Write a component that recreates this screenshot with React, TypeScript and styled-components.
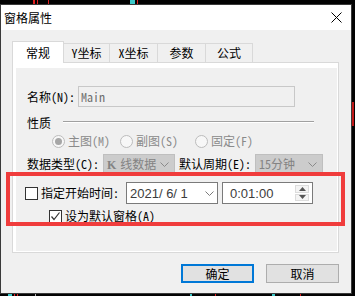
import React from "react";
import styled, { createGlobalStyle } from "styled-components";

const GlobalStyle = createGlobalStyle`
  html, body {
    margin: 0;
    padding: 0;
    background: #000;
  }
  body {
    font-family: "Noto Sans CJK SC", "Noto Sans", sans-serif;
    font-size: 12px;
    color: #000;
    font-feature-settings: "hwid" 1;
  }
  * {
    box-sizing: border-box;
  }
`;

const Desktop = styled.div`
  position: relative;
  width: 355px;
  height: 296px;
  padding-top: 4px;
  overflow: hidden;
  background: #030303;
`;

const ChartBg = styled.svg`
  position: absolute;
  left: 0;
  top: 0;
`;

const Window = styled.div`
  position: relative;
  width: 352px;
  height: 290px;
  border: 1px solid #3a3a3a;
  background: #f0f0f0;
  display: flex;
  flex-direction: column;
`;

const TitleBar = styled.div`
  height: 25px;
  background: #fff;
  display: flex;
  align-items: center;
  justify-content: space-between;
  padding: 0 9px 0 3px;
`;

const Title = styled.span`
  font-size: 12px;
  line-height: 16px;
  font-feature-settings: normal;
`;

const Body = styled.div`
  flex: 1;
  display: flex;
  flex-direction: column;
  padding: 11px 12px 0 11px;
`;

const TabStrip = styled.div`
  display: flex;
  align-items: flex-end;
  height: 21px;
  position: relative;
  z-index: 1;
`;

const Tab = styled.div<{ $active?: boolean; $w: number }>`
  width: ${(p) => p.$w}px;
  height: ${(p) => (p.$active ? 22 : 19)}px;
  margin-bottom: ${(p) => (p.$active ? -1 : 0)}px;
  background: ${(p) => (p.$active ? "#fff" : "#f0f0f0")};
  border-top: 1px solid #d9d9d9;
  border-right: 1px solid #d9d9d9;
  border-left: ${(p) => (p.$active ? "1px solid #d9d9d9" : "none")};
  display: flex;
  align-items: center;
  justify-content: center;
  line-height: 14px;
`;

const Panel = styled.div`
  height: 191px;
  border: 1px solid #d9d9d9;
  background: #fff;
  padding: 5px 1px 1px 3px;
  display: flex;
`;

const Page = styled.div`
  flex: 1;
  background: #f0f0f0;
  display: flex;
  flex-direction: column;
  padding-left: 11px;
`;

const Row = styled.div<{ $h: number; $top: number; $indent?: number }>`
  display: flex;
  align-items: center;
  height: ${(p) => p.$h}px;
  margin-top: ${(p) => p.$top}px;
  margin-left: ${(p) => p.$indent ?? 0}px;
`;

const Label = styled.span<{ $w?: number; $muted?: boolean }>`
  width: ${(p) => (p.$w ? `${p.$w}px` : "auto")};
  flex-shrink: 0;
  line-height: 16px;
  white-space: nowrap;
  color: ${(p) => (p.$muted ? "#8a8a8a" : "#000")};
`;

const TextBox = styled.div`
  width: 217px;
  height: 21px;
  border: 1px solid #c8c8c8;
  background: #f0f0f0;
  color: #6d6d6d;
  padding-left: 2px;
  display: flex;
  align-items: center;
  line-height: 14px;
`;

const GroupLine = styled.div`
  width: 251px;
  height: 2px;
  margin: -2px 0 0 12px;
  border-top: 1px solid #a0a0a0;
  border-bottom: 1px solid #fff;
`;

const RadioItem = styled.div<{ $w?: number }>`
  width: ${(p) => (p.$w ? `${p.$w}px` : "auto")};
  display: flex;
  align-items: center;
  gap: 3px;
`;

const RadioCircle = styled.span<{ $checked?: boolean }>`
  width: 13px;
  height: 13px;
  border-radius: 50%;
  border: 1px solid #bcbcbc;
  background: #f7f7f7;
  display: flex;
  align-items: center;
  justify-content: center;

  &::after {
    content: "";
    width: 7px;
    height: 7px;
    border-radius: 50%;
    background: ${(p) => (p.$checked ? "#a6a6a6" : "transparent")};
  }
`;

const Combo = styled.div<{ $w: number }>`
  width: ${(p) => p.$w}px;
  height: 20px;
  border: 1px solid #bfbfbf;
  background: #cccccc;
  color: #838383;
  display: flex;
  align-items: center;
  justify-content: space-between;
  padding: 0 5px 0 3px;
  line-height: 14px;
  white-space: nowrap;
  flex-shrink: 0;

  span {
    white-space: nowrap;
  }

  b {
    font-family: "Liberation Serif", serif;
    font-size: 12px;
    margin-right: 4px;
  }
`;

const CheckItem = styled.div<{ $w?: number }>`
  width: ${(p) => (p.$w ? `${p.$w}px` : "auto")};
  display: flex;
  align-items: center;
  gap: 3px;
  flex-shrink: 0;
`;

const CheckBox = styled.span`
  width: 13px;
  height: 13px;
  border: 1px solid #333;
  background: #fff;
  display: flex;
  align-items: center;
  justify-content: center;
`;

const Picker = styled.div<{ $w: number; $pad: number }>`
  width: ${(p) => p.$w}px;
  height: 22px;
  border: 1px solid #7a7a7a;
  background: #fff;
  display: flex;
  align-items: center;
  justify-content: space-between;
  padding: 0 3px 0 ${(p) => p.$pad}px;
  font-family: "Liberation Sans", Arial, sans-serif;
  font-size: 13px;
  color: #3c3c3c;
  flex-shrink: 0;
  font-feature-settings: normal;
  white-space: pre;
`;

const Spin = styled.div`
  width: 14px;
  height: 16px;
  display: flex;
  flex-direction: column;
  gap: 1px;
`;

const SpinHalf = styled.div`
  flex: 1;
  border: 1px solid #dcdcdc;
  background: #f4f4f4;
  display: flex;
  align-items: center;
  justify-content: center;
`;

const ButtonRow = styled.div`
  display: flex;
  justify-content: flex-end;
  gap: 12px;
  margin-top: 11px;
`;

const Button = styled.div<{ $primary?: boolean }>`
  width: 73px;
  height: 19px;
  background: #e1e1e1;
  border: ${(p) => (p.$primary ? "2px solid #0078d7" : "1px solid #adadad")};
  display: flex;
  align-items: center;
  justify-content: center;
  line-height: 14px;
`;

const Highlight = styled.div`
  position: absolute;
  left: 6px;
  top: 172px;
  width: 339px;
  height: 54px;
  border: 4px solid #f03c3c;
  pointer-events: none;
`;

const Chevron = ({ color = "#8a8a8a" }: { color?: string }) => (
  <svg width="9" height="5" viewBox="0 0 9 5" style={{ flexShrink: 0 }}>
    <polyline points="0.5,0.5 4.5,4.5 8.5,0.5" fill="none" stroke={color} strokeWidth="1" />
  </svg>
);

const tabs = [
  { label: "常规", w: 52 },
  { label: "Y坐标", w: 46 },
  { label: "X坐标", w: 48 },
  { label: "参数", w: 48 },
  { label: "公式", w: 47 },
];

export default function App() {
  return (
    <Desktop>
      <GlobalStyle />
      <ChartBg width="355" height="296">
        <rect x="33" y="0" width="2" height="4" fill="#e02020" />
        <rect x="37" y="0" width="1" height="4" fill="#e02020" />
        <rect x="48" y="0" width="1" height="4" fill="#e02020" />
        <rect x="130" y="0" width="5" height="4" fill="#3cc8c8" />
        <rect x="137" y="0" width="1" height="4" fill="#e02020" />
        <rect x="352" y="102" width="2" height="24" fill="#c01818" />
        <rect x="8" y="294" width="4" height="2" fill="#3cc8c8" />
        <rect x="14" y="294" width="1" height="2" fill="#e02020" />
        <rect x="17" y="294" width="1" height="2" fill="#e02020" />
        <rect x="35" y="294" width="1" height="2" fill="#b0b0b0" />
        <rect x="190" y="294" width="2" height="2" fill="#3cc8c8" />
        <rect x="215" y="294" width="1" height="2" fill="#e02020" />
        <rect x="272" y="294" width="3" height="2" fill="#3cc8c8" />
        <rect x="300" y="294" width="1" height="2" fill="#e02020" />
      </ChartBg>
      <Window>
        <TitleBar>
          <Title>窗格属性</Title>
          <svg width="11" height="11" viewBox="0 0 11 11">
            <path d="M0.5 0.5 L10.5 10.5 M10.5 0.5 L0.5 10.5" stroke="#000" strokeWidth="1" />
          </svg>
        </TitleBar>
        <Body>
          <TabStrip>
            {tabs.map((t, i) => (
              <Tab key={t.label} $active={i === 0} $w={t.w}>
                {t.label}
              </Tab>
            ))}
          </TabStrip>
          <Panel>
            <Page>
              <Row $h={21} $top={18}>
                <Label $w={51}>名称(N):</Label>
                <TextBox>Main</TextBox>
              </Row>
              <Row $h={16} $top={8}>
                <Label>性质</Label>
                <GroupLine />
              </Row>
              <Row $h={16} $top={2} $indent={25}>
                <RadioItem $w={68}>
                  <RadioCircle $checked />
                  <Label $muted>主图(M)</Label>
                </RadioItem>
                <RadioItem $w={75}>
                  <RadioCircle />
                  <Label $muted>副图(S)</Label>
                </RadioItem>
                <RadioItem>
                  <RadioCircle />
                  <Label $muted>固定(F)</Label>
                </RadioItem>
              </Row>
              <Row $h={20} $top={5}>
                <Label $w={76}>数据类型(C):</Label>
                <Combo $w={72}>
                  <span>
                    <b>K</b>线数据
                  </span>
                  <Chevron />
                </Combo>
                <Label $w={76} style={{ marginLeft: 4 }}>
                  默认周期(E):
                </Label>
                <Combo $w={68}>
                  <span>15分钟</span>
                  <Chevron />
                </Combo>
              </Row>
              <Row $h={22} $top={8} $indent={-2}>
                <CheckItem $w={101}>
                  <CheckBox />
                  <Label>指定开始时间:</Label>
                </CheckItem>
                <Picker $w={92} $pad={3}>
                  <span>2021/ 6/ 1</span>
                  <Chevron color="#7a7a7a" />
                </Picker>
                <Picker $w={91} $pad={7} style={{ marginLeft: 4 }}>
                  <span>0:01:00</span>
                  <Spin>
                    <SpinHalf>
                      <svg width="7" height="4" viewBox="0 0 7 4">
                        <polygon points="0,4 3.5,0 7,4" fill="#555" />
                      </svg>
                    </SpinHalf>
                    <SpinHalf>
                      <svg width="7" height="4" viewBox="0 0 7 4">
                        <polygon points="0,0 3.5,4 7,0" fill="#555" />
                      </svg>
                    </SpinHalf>
                  </Spin>
                </Picker>
              </Row>
              <Row $h={16} $top={4} $indent={22}>
                <CheckItem>
                  <CheckBox>
                    <svg width="11" height="11" viewBox="0 0 11 11">
                      <polyline points="1.5,5.5 4,8.5 9.5,1.5" fill="none" stroke="#333" strokeWidth="1.2" />
                    </svg>
                  </CheckBox>
                  <Label>设为默认窗格(A)</Label>
                </CheckItem>
              </Row>
            </Page>
          </Panel>
          <ButtonRow>
            <Button $primary>确定</Button>
            <Button>取消</Button>
          </ButtonRow>
        </Body>
      </Window>
      <Highlight />
    </Desktop>
  );
}
